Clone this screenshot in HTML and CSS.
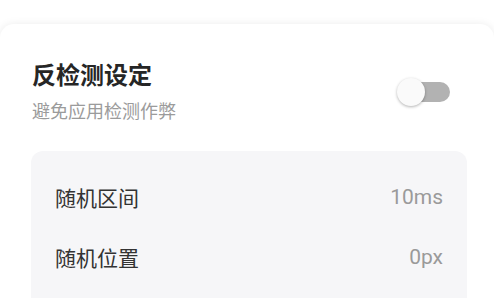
FILE: index.html
```html
<html>
<head>
	<meta charset="utf-8" />
	<title>反检测设定</title>
	<link rel="stylesheet" href="styles.css">
</head>
<body>
	<div class="card">
		<div class="card-header">
			<div class="heading">
				<div class="title">反检测设定</div>
				<div class="subtitle">避免应用检测作弊</div>
			</div>
			<div class="switch">
				<div class="switch-track"></div>
				<div class="switch-thumb"></div>
			</div>
		</div>
		<div class="panel">
			<div class="row">
				<span class="row-label">随机区间</span>
				<span class="row-value">10ms</span>
			</div>
			<div class="row">
				<span class="row-label">随机位置</span>
				<span class="row-value">0px</span>
			</div>
		</div>
	</div>
</body>
</html>
```

FILE: styles.css
```css
body {
	margin: 0;
	background-color: #ffffff;
	font-family: Roboto, "Noto Sans CJK SC", sans-serif;
	overflow: hidden;
}

.card {
	display: flex;
	flex-direction: column;
	margin-top: 24px;
	width: 494px;
	height: 274px;
	box-sizing: border-box;
	padding: 36px 27px 0 31px;
	background-color: #ffffff;
	border-radius: 14px 14px 0 0;
	box-shadow: 0 0 8px rgba(0, 0, 0, 0.08);
}

.card-header {
	display: flex;
	align-items: center;
	justify-content: space-between;
	padding: 0 17px 0 1px;
}

.title {
	font-size: 24px;
	line-height: 32px;
	font-weight: bold;
	color: #262626;
}

.subtitle {
	margin-top: 8px;
	font-size: 18px;
	line-height: 24px;
	color: #9b9b9b;
}

.switch {
	position: relative;
	width: 53px;
	height: 28px;
}

.switch-track {
	position: absolute;
	right: 0;
	top: 4px;
	width: 50px;
	height: 20px;
	border-radius: 10px;
	background-color: #b2b2b2;
}

.switch-thumb {
	position: absolute;
	left: 0;
	top: 0;
	width: 28px;
	height: 28px;
	border-radius: 50%;
	background-color: #fafafa;
	box-shadow: 0 1px 3px rgba(0, 0, 0, 0.3);
}

.panel {
	flex: 1;
	margin-top: 27px;
	padding-top: 16px;
	background-color: #f6f6f8;
	border-radius: 12px 12px 0 0;
}

.row {
	display: flex;
	align-items: center;
	justify-content: space-between;
	height: 60px;
	padding: 0 24px;
}

.row-label {
	font-size: 21px;
	color: #333333;
}

.row-value {
	font-size: 21px;
	color: #9a9a9a;
}
```
